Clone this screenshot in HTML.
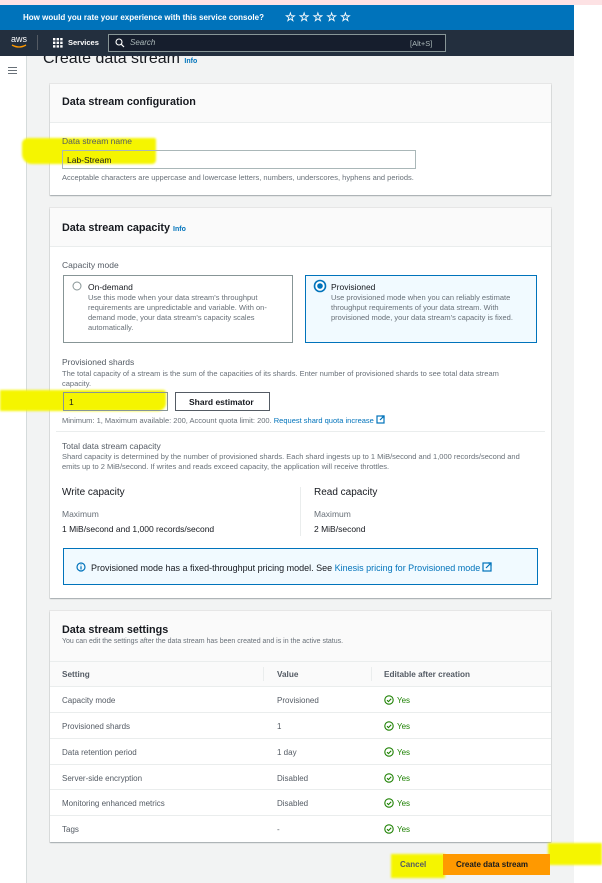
<!DOCTYPE html>
<html><head><meta charset="utf-8">
<style>
*{box-sizing:border-box;margin:0;padding:0}
body{width:602px;height:883px;position:relative;overflow:hidden;background:#fff;font-family:"Liberation Sans",Arial,sans-serif;color:#16191f}
.a{position:absolute}
.card{position:absolute;left:50px;width:501px;background:#fff;box-shadow:0 1px 1px rgba(0,28,36,.3),0 0 0 1px #e6e6e6}
.hd{background:#fafafa;border-bottom:1px solid #eaeded}
.t{font-size:10.8px;font-weight:bold;color:#16191f;white-space:nowrap}
.s{font-size:7.5px;color:#687078;white-space:nowrap}
.l{font-size:8.5px;color:#16191f;white-space:nowrap}
.link{color:#0073bb}
.info{font-size:7px;font-weight:bold;color:#0073bb}
.yl{position:absolute;background:#f5f500;filter:blur(1px)}
.row{position:absolute;left:0;width:501px;border-top:1px solid #eaeded;font-size:8px;color:#545b64;white-space:nowrap}
.yes{color:#1d8102}
.ext{display:inline-block;vertical-align:-1px;margin-left:2px}
</style></head><body>
<div class="a" style="left:0;top:0;width:602px;height:5px;background:#fde2e4"></div>
<div class="a" style="left:0;top:5px;width:574px;height:25px;background:#0073bb;color:#fff;font-size:8px;font-weight:bold">
 <span class="a" style="left:23px;top:8px;white-space:nowrap">How would you rate your experience with this service console?</span>
 <span class="a" style="left:285px;top:5px;font-size:12px;letter-spacing:3px;white-space:nowrap">☆☆☆☆☆</span>
</div>
<div class="a" style="left:0;top:30px;width:574px;height:26px;background:#232f3e;color:#fff">
 <span class="a" style="left:11px;top:4px;font-size:9px">aws</span>
 <svg class="a" style="left:11px;top:14px" width="16" height="5"><path d="M1 1 Q8 5 15 1" stroke="#f90" stroke-width="1.3" fill="none"/></svg>
 <div class="a" style="left:37px;top:5px;width:1px;height:15px;background:#545b64"></div>
 <svg class="a" style="left:53px;top:8px" width="10" height="10" fill="#fff"><rect x="0" y="0" width="2.4" height="2.4"/><rect x="3.6" y="0" width="2.4" height="2.4"/><rect x="7.2" y="0" width="2.4" height="2.4"/><rect x="0" y="3.6" width="2.4" height="2.4"/><rect x="3.6" y="3.6" width="2.4" height="2.4"/><rect x="7.2" y="3.6" width="2.4" height="2.4"/><rect x="0" y="7.2" width="2.4" height="2.4"/><rect x="3.6" y="7.2" width="2.4" height="2.4"/><rect x="7.2" y="7.2" width="2.4" height="2.4"/></svg>
 <span class="a" style="left:68px;top:8px;font-size:7.5px;font-weight:bold">Services</span>
 <div class="a" style="left:108px;top:4px;width:338px;height:18px;border:1px solid #879596;background:#161e2d"></div>
 <svg class="a" style="left:115px;top:8px" width="10" height="10"><circle cx="4" cy="4" r="3" stroke="#fff" stroke-width="1.1" fill="none"/><path d="M6.3 6.3 9 9" stroke="#fff" stroke-width="1.2"/></svg>
 <span class="a" style="left:130px;top:8px;font-size:8px;font-style:italic;color:#aab7b8">Search</span>
 <span class="a" style="left:410px;top:9px;font-size:7.5px;color:#aab7b8">[Alt+S]</span>
</div>
<div class="a" style="left:26px;top:56px;width:548px;height:827px;background:#f2f3f3;border-left:1px solid #d5dbdb"></div>
<div class="a" style="left:8px;top:67px;width:9px;height:1px;background:#687078;box-shadow:0 3px 0 #687078,0 6px 0 #687078"></div>
<div class="a" style="left:40px;top:56px;height:12px;width:300px;overflow:hidden">
 <span class="a" style="left:3px;top:-6px;font-size:16px;color:#16191f;white-space:nowrap">Create data stream <span class="info" style="font-size:7px">Info</span></span>
</div>

<!-- card 1 -->
<div class="card" style="top:84px;height:111px">
 <div class="hd" style="height:39px"><span class="a t" style="left:12px;top:12px">Data stream configuration</span></div>
</div>
<div class="yl" style="left:22px;top:138px;width:134px;height:26px;border-radius:6px 2px 4px 10px"></div>
<span class="a l" style="left:62px;top:136px;color:#545b64">Data stream name</span>
<div class="a" style="left:62px;top:150px;width:354px;height:19px;border:1px solid #aab7b8"></div>
<span class="a l" style="left:67px;top:155px">Lab-Stream</span>
<span class="a s" style="left:62px;top:173px">Acceptable characters are uppercase and lowercase letters, numbers, underscores, hyphens and periods.</span>

<!-- card 2 -->
<div class="card" style="top:208px;height:390px">
 <div class="hd" style="height:39px"><span class="a t" style="left:12px;top:14px">Data stream capacity <span class="info">Info</span></span></div>
</div>
<span class="a l" style="left:62px;top:260px;color:#545b64">Capacity mode</span>
<div class="a" style="left:63px;top:275px;width:230px;height:68px;border:1px solid #879596"></div>
<svg class="a" style="left:72px;top:281px" width="10" height="10"><circle cx="5" cy="5" r="4" stroke="#879596" fill="#fff"/></svg>
<span class="a l" style="left:88px;top:282px">On-demand</span>
<div class="a s" style="left:88px;top:293px;width:200px;line-height:10px;white-space:normal">Use this mode when your data stream's throughput requirements are unpredictable and variable. With on-demand mode, your data stream's capacity scales automatically.</div>
<div class="a" style="left:305px;top:275px;width:232px;height:68px;border:1px solid #0073bb;background:#f1faff"></div>
<svg class="a" style="left:313px;top:279px" width="14" height="14"><circle cx="7" cy="7" r="5.5" stroke="#0073bb" stroke-width="1.6" fill="#fff"/><circle cx="7" cy="7" r="2.8" fill="#0073bb"/></svg>
<span class="a l" style="left:331px;top:282px">Provisioned</span>
<div class="a s" style="left:331px;top:293px;width:200px;line-height:10px;white-space:normal">Use provisioned mode when you can reliably estimate throughput requirements of your data stream. With provisioned mode, your data stream's capacity is fixed.</div>
<span class="a l" style="left:62px;top:357px;color:#545b64">Provisioned shards</span>
<div class="a s" style="left:62px;top:369px;width:460px;line-height:10px;white-space:normal">The total capacity of a stream is the sum of the capacities of its shards. Enter number of provisioned shards to see total data stream capacity.</div>
<div class="yl" style="left:0;top:390px;width:166px;height:21px;border-radius:0 3px 8px 0"></div>
<div class="a" style="left:63px;top:392px;width:105px;height:19px;border:1px solid #879596"></div>
<span class="a l" style="left:69px;top:397px">1</span>
<div class="a" style="left:175px;top:392px;width:95px;height:19px;border:1px solid #545b64;background:#fff"></div>
<span class="a" style="left:189px;top:397px;font-size:8.5px;font-weight:bold;color:#16191f">Shard estimator</span>
<span class="a s" style="left:62px;top:415px">Minimum: 1, Maximum available: 200, Account quota limit: 200. <span class="link">Request shard quota increase</span><svg class="ext" width="9" height="9"><rect x="1" y="1" width="7" height="7" fill="none" stroke="#0073bb" stroke-width="1.2"/><path d="M4 5 8 1M5.5 1H8V3.5" stroke="#0073bb" stroke-width="1.2" fill="none"/></svg></span>
<div class="a" style="left:56px;top:431px;width:489px;height:1px;background:#eaeded"></div>
<span class="a l" style="left:62px;top:441px;color:#545b64">Total data stream capacity</span>
<div class="a s" style="left:62px;top:452px;width:475px;line-height:10px;white-space:normal">Shard capacity is determined by the number of provisioned shards. Each shard ingests up to 1 MiB/second and 1,000 records/second and emits up to 2 MiB/second. If writes and reads exceed capacity, the application will receive throttles.</div>
<span class="a" style="left:62px;top:487px;font-size:10px">Write capacity</span>
<span class="a l" style="left:62px;top:509px;color:#687078">Maximum</span>
<span class="a l" style="left:62px;top:524px">1 MiB/second and 1,000 records/second</span>
<div class="a" style="left:300px;top:487px;width:1px;height:49px;background:#eaeded"></div>
<span class="a" style="left:314px;top:487px;font-size:10px">Read capacity</span>
<span class="a l" style="left:314px;top:509px;color:#687078">Maximum</span>
<span class="a l" style="left:314px;top:524px">2 MiB/second</span>
<div class="a" style="left:63px;top:548px;width:475px;height:37px;border:1px solid #0073bb;background:#f1faff"></div>
<svg class="a" style="left:76px;top:562px" width="10" height="10"><circle cx="5" cy="5" r="4" stroke="#0073bb" stroke-width="1.2" fill="none"/><path d="M5 4.3V7.5M5 2.5v.8" stroke="#0073bb" stroke-width="1.2"/></svg>
<span class="a" style="left:91px;top:562px;font-size:9px;white-space:nowrap">Provisioned mode has a fixed-throughput pricing model. See <span class="link">Kinesis pricing for Provisioned mode</span><svg class="ext" width="10" height="10"><rect x="1" y="1" width="8" height="8" fill="none" stroke="#0073bb" stroke-width="1.2"/><path d="M4 6 9 1M6 1H9V4" stroke="#0073bb" stroke-width="1.2" fill="none"/></svg></span>

<!-- card 3 -->
<div class="card" style="top:611px;height:231px">
 <div class="hd" style="height:51px">
  <span class="a t" style="left:12px;top:13px">Data stream settings</span>
  <span class="a s" style="left:12px;top:27px;font-size:7px">You can edit the settings after the data stream has been created and is in the active status.</span>
 </div>
 <div class="a" style="left:0;top:51px;width:501px;height:24px;background:#fafafa;font-size:8.2px;font-weight:bold;color:#545b64;white-space:nowrap">
  <span class="a" style="left:12px;top:8px">Setting</span>
  <div class="a" style="left:213px;top:5px;width:1px;height:14px;background:#eaeded"></div>
  <span class="a" style="left:227px;top:8px">Value</span>
  <div class="a" style="left:321px;top:5px;width:1px;height:14px;background:#eaeded"></div>
  <span class="a" style="left:334px;top:8px">Editable after creation</span>
 </div>
 <div class="row" style="top:75px;height:26px"><span class="a" style="left:12px;top:9px">Capacity mode</span><span class="a" style="left:227px;top:9px">Provisioned</span></div>
 <div class="row" style="top:101px;height:26px"><span class="a" style="left:12px;top:9px">Provisioned shards</span><span class="a" style="left:227px;top:9px">1</span></div>
 <div class="row" style="top:127px;height:26px"><span class="a" style="left:12px;top:9px">Data retention period</span><span class="a" style="left:227px;top:9px">1 day</span></div>
 <div class="row" style="top:153px;height:25px"><span class="a" style="left:12px;top:9px">Server-side encryption</span><span class="a" style="left:227px;top:9px">Disabled</span></div>
 <div class="row" style="top:178px;height:26px"><span class="a" style="left:12px;top:9px">Monitoring enhanced metrics</span><span class="a" style="left:227px;top:9px">Disabled</span></div>
 <div class="row" style="top:204px;height:27px"><span class="a" style="left:12px;top:9px">Tags</span><span class="a" style="left:227px;top:9px">-</span></div>
</div>
<div id="yes"></div>
<script>
var ys=[700,726,752,778,803,829],h='';
ys.forEach(function(y){h+='<svg class="a" style="left:384px;top:'+(y-5)+'px" width="10" height="10"><circle cx="5" cy="5" r="4.2" stroke="#1d8102" stroke-width="1.1" fill="none"/><path d="M3 5.2 4.5 6.6 7.2 3.7" stroke="#1d8102" stroke-width="1.1" fill="none"/></svg><span class="a yes" style="left:397px;top:'+(y-4)+'px;font-size:8px">Yes</span>';});
document.getElementById('yes').innerHTML=h;
</script>

<!-- buttons -->
<div class="yl" style="left:391px;top:854px;width:54px;height:24px"></div>
<div class="yl" style="left:548px;top:843px;width:54px;height:22px"></div>
<span class="a" style="left:400px;top:860px;font-size:8px;font-weight:bold;color:#545b64">Cancel</span>
<div class="a" style="left:443px;top:854px;width:107px;height:21px;background:#ff9900"></div>
<span class="a" style="left:456px;top:860px;font-size:8px;font-weight:bold;color:#16191f">Create data stream</span>
</body></html>
